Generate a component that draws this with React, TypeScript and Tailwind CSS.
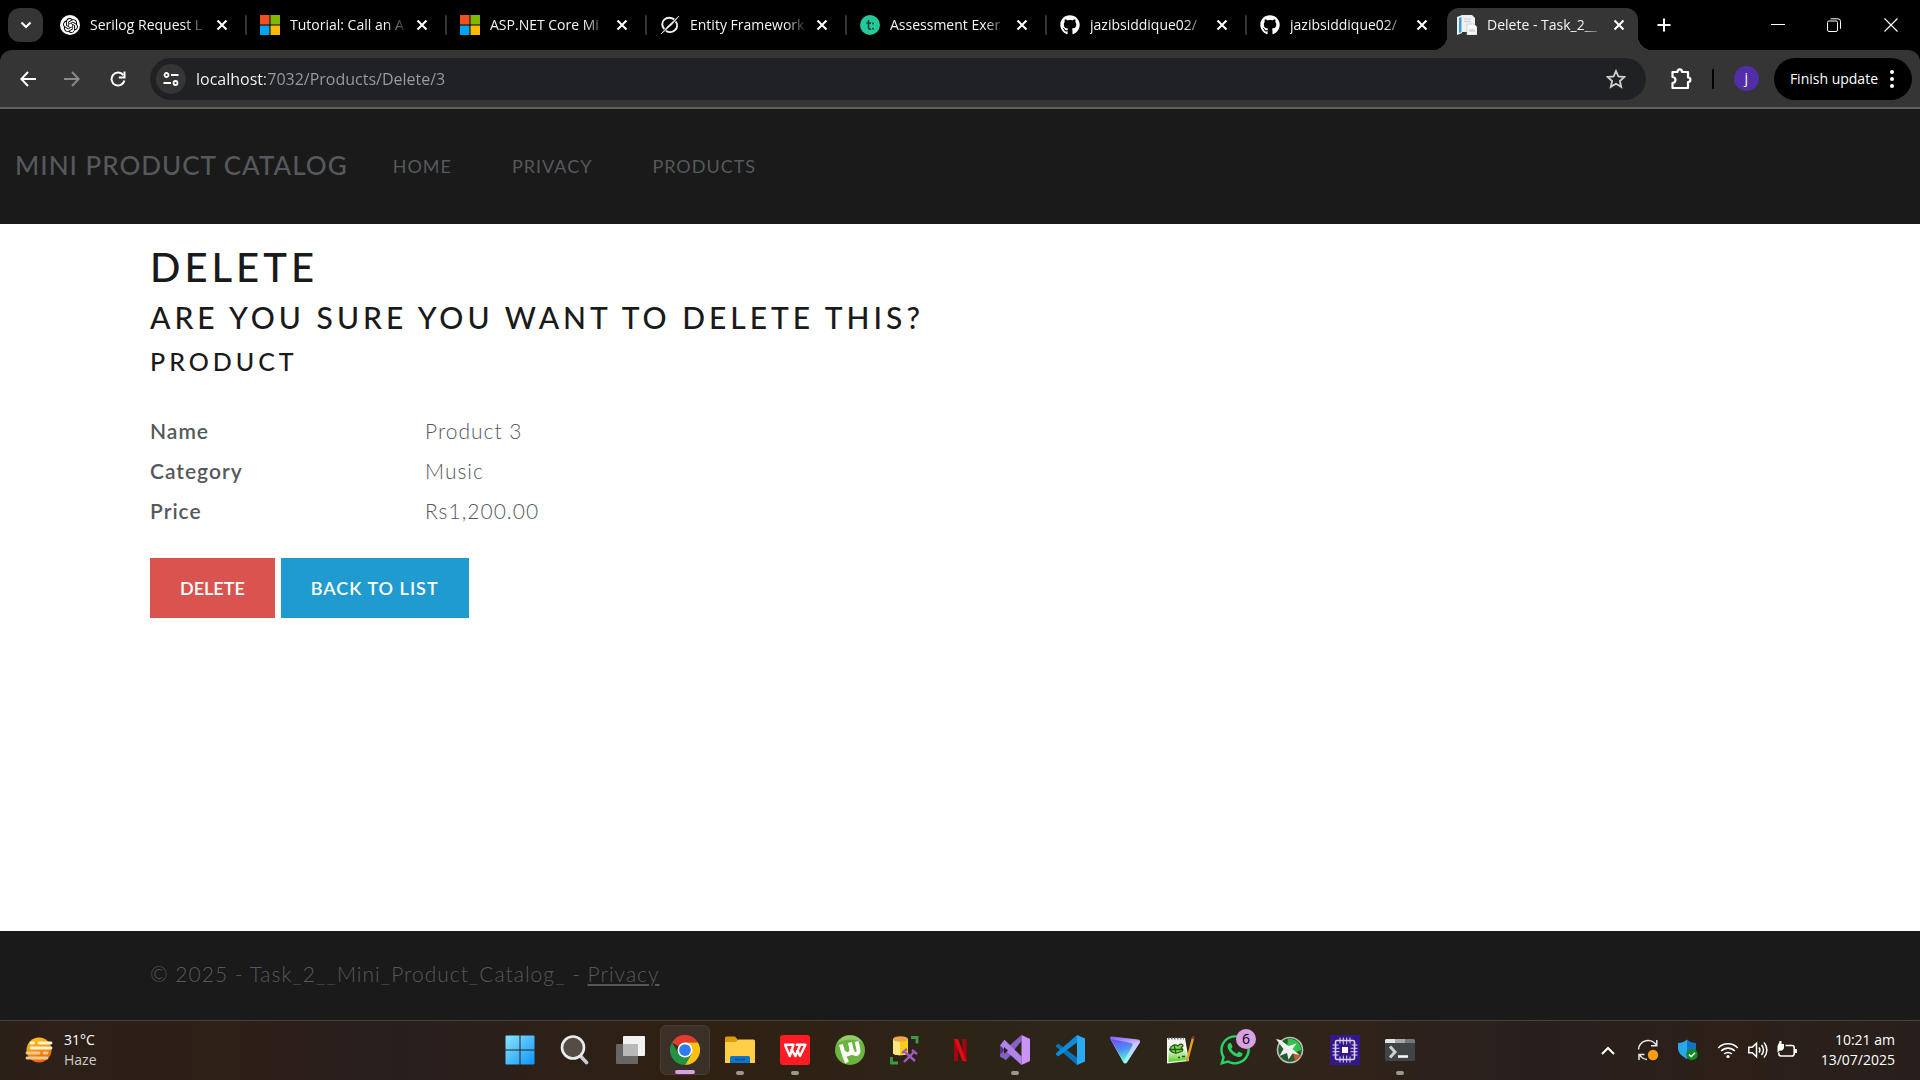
import type { ReactNode } from "react";
import { FaGithub, FaWhatsapp } from "react-icons/fa";
import { SiOpenai } from "react-icons/si";

/* ---------- favicons ---------- */

const OpenAiFavicon = () => (
  <span className="flex size-5 items-center justify-center rounded-full bg-white text-black">
    <SiOpenai size={15} />
  </span>
);

const MicrosoftFavicon = () => (
  <svg viewBox="0 0 20 20" className="size-5">
    <rect width="9.5" height="9.5" fill="#f25022" />
    <rect x="10.5" width="9.5" height="9.5" fill="#7fba00" />
    <rect y="10.5" width="9.5" height="9.5" fill="#00a4ef" />
    <rect x="10.5" y="10.5" width="9.5" height="9.5" fill="#ffb900" />
  </svg>
);

const SlashFavicon = () => (
  <svg viewBox="0 0 20 20" className="size-5" fill="none" stroke="#f1f1f1">
    <path d="M14.2 4.6A7 6.6 0 0 0 4.3 14M6 15.800A7 6.600 0 0 0 15.700 6.500" strokeWidth="2" />
    <path d="M1 19 8 11 19 1 12 9.500Z" fill="#f1f1f1" strokeWidth="0.6" />
  </svg>
);

const TealFavicon = () => (
  <svg viewBox="0 0 20 20" className="size-5">
    <circle cx="10" cy="10" r="10" fill="#22c99a" />
    <path d="M8.500 5v7.500c0 1.500 1 2 2.500 1.600M6.300 8h4.700" fill="none" stroke="#10403a" strokeWidth="1.600" />
    <circle cx="13" cy="8.500" r="1" fill="#10403a" />
    <circle cx="13" cy="13.800" r="1" fill="#10403a" />
  </svg>
);

const GithubFavicon = () => <FaGithub className="size-5 text-white" />;

const DocumentFavicon = () => (
  <svg viewBox="0 0 20 20" className="size-5">
    <path d="M0 2 5 0v18l-5 2Z" fill="#e8f1f7" />
    <path d="M2 3 4.500 2v15L2 18Z" fill="#3d9bd0" />
    <path d="M5 0h10l3 3v14H5Z" fill="#eef0f1" />
    <path d="M7 4h7M7 6.500h7" stroke="#c3cdd3" />
    <path d="M10 9h7l3 3v8H10Z" fill="#fafafa" stroke="#b9c4ca" strokeWidth="0.6" />
    <path d="M12 14h6v3h-6Z" fill="#d5dde2" />
  </svg>
);

/* ---------- browser chrome ---------- */

const CloseGlyph = () => (
  <svg viewBox="0 0 12 12" className="size-3" stroke="#fff" strokeWidth="2" fill="none">
    <path d="M1.500 1.500 10.500 10.500M10.500 1.500 1.500 10.500" />
  </svg>
);

const inactiveTabs: { title: string; icon: ReactNode }[] = [
  { title: "Serilog Request L", icon: <OpenAiFavicon /> },
  { title: "Tutorial: Call an A", icon: <MicrosoftFavicon /> },
  { title: "ASP.NET Core Mi", icon: <MicrosoftFavicon /> },
  { title: "Entity Framework", icon: <SlashFavicon /> },
  { title: "Assessment Exer", icon: <TealFavicon /> },
  { title: "jazibsiddique02/", icon: <GithubFavicon /> },
  { title: "jazibsiddique02/", icon: <GithubFavicon /> },
];

function TabLabel({ title, icon }: { title: string; icon: ReactNode }) {
  return (
    <>
      <span className="shrink-0">{icon}</span>
      <span className="ml-2.5 min-w-0 flex-1 whitespace-nowrap mask-r-from-80% mask-r-to-100%">{title}</span>
      <button aria-label={`Close ${title}`} className="ml-2 flex size-3 shrink-0 items-center justify-center">
        <CloseGlyph />
      </button>
    </>
  );
}

function TabStrip() {
  return (
    <div className="flex h-[50px] bg-black text-sm text-[#f4f4f4]">
      <button
        aria-label="Search tabs"
        className="mt-2 ml-2 flex h-[34px] w-[35px] shrink-0 items-center justify-center rounded-xl bg-[#353535]"
      >
        <svg viewBox="0 0 12 8" className="w-3" fill="none" stroke="#fff" strokeWidth="2.200">
          <path d="M1.500 1.500 6 6 10.500 1.500" />
        </svg>
      </button>
      <div className="ml-1 flex min-w-0">
        {inactiveTabs.map((tab, i) => (
          <div key={i} className="flex w-[200px] min-w-0 items-center pl-[13px]">
            <TabLabel {...tab} />
            <span className={i === 6 ? "ml-[17px] w-0.5" : "ml-[17px] h-5 w-0.5 rounded bg-[#353535]"} />
          </div>
        ))}
        <div className="relative mt-2 flex w-[191px] items-center rounded-t-xl bg-[#353535] pr-[13px] pb-2 pl-2.5">
          <span className="absolute bottom-0 -left-3.5 size-3.5 bg-[radial-gradient(circle_at_0_0,#000_14px,#353535_14px)]" />
          <span className="absolute -right-3.5 bottom-0 size-3.5 bg-[radial-gradient(circle_at_100%_0,#000_14px,#353535_14px)]" />
          <TabLabel title="Delete - Task_2__" icon={<DocumentFavicon />} />
        </div>
      </div>
      <button aria-label="New tab" className="ml-[19px] self-center">
        <svg viewBox="0 0 14 14" className="size-3.5" stroke="#fff" strokeWidth="2">
          <path d="M7 0.500v13M0.500 7h13" />
        </svg>
      </button>
      <div className="ml-auto flex shrink-0">
        <button aria-label="Minimize" className="flex w-14 items-center justify-center">
          <svg viewBox="0 0 14 14" className="size-3.5" stroke="#fff">
            <path d="M0 6.500h14" />
          </svg>
        </button>
        <button aria-label="Restore" className="flex w-14 items-center justify-center">
          <svg viewBox="0 0 14 14" className="size-3.5" stroke="#fff" fill="none">
            <rect x="0.500" y="3" width="10" height="10.500" rx="1.500" />
            <path d="M3.500 0.800H11a2.500 2.500 0 0 1 2.500 2.500v7.500" />
          </svg>
        </button>
        <button aria-label="Close window" className="flex w-[58px] items-center justify-center">
          <svg viewBox="0 0 14 14" className="size-3.5" stroke="#fff" strokeWidth="1.200">
            <path d="M0.500 0.500 13.500 13.500M13.500 0.500 0.500 13.500" />
          </svg>
        </button>
      </div>
    </div>
  );
}

function AddressBar() {
  return (
    <div className="bg-black">
      <div className="flex h-[59px] items-center rounded-t-xl border-b-2 border-[#5f6162] bg-[#353535] pr-2">
        <button aria-label="Back" className="ml-5 flex w-4 justify-center">
          <svg viewBox="0 0 16 16" className="size-4" stroke="#fff" strokeWidth="2" fill="none">
            <path d="M16 8H1.500M8 1 1.300 8 8 15" />
          </svg>
        </button>
        <button aria-label="Forward" className="ml-7 flex w-4 justify-center">
          <svg viewBox="0 0 16 16" className="size-4" stroke="#8a8a8a" strokeWidth="2" fill="none">
            <path d="M0 8h14.500M8 1l6.700 7L8 15" />
          </svg>
        </button>
        <button aria-label="Reload" className="ml-[30px] flex w-4 justify-center">
          <svg viewBox="0 0 16 16" className="size-4" stroke="#fff" strokeWidth="2" fill="none">
            <path d="M13.300 4.200A6.500 6.500 0 1 0 14.400 9.500" />
            <path d="M14.500 0.500v6H8.800" />
          </svg>
        </button>
        <div className="ml-6 flex h-[42px] min-w-0 flex-1 items-center rounded-full bg-[#202124] pr-5 pl-1.5">
          <button
            aria-label="View site information"
            className="flex size-[30px] shrink-0 items-center justify-center rounded-full bg-[#353535]"
          >
            <svg viewBox="0 0 16 16" className="size-4" stroke="#fff" strokeWidth="1.800" fill="none">
              <circle cx="3.500" cy="4" r="2" />
              <path d="M8 4h7.500M0.500 12H8" />
              <circle cx="12.500" cy="12" r="2" />
            </svg>
          </button>
          <input
            aria-label="Address"
            defaultValue="localhost:7032/Products/Delete/3"
            className="ml-2.5 min-w-0 flex-1 bg-[linear-gradient(to_right,#fff_69px,#9a9da1_69px)] bg-clip-text text-base text-transparent outline-none"
          />
          <button aria-label="Bookmark this tab">
            <svg viewBox="0 0 20 20" className="size-5" fill="none" stroke="#d0d0d0" strokeWidth="1.800">
              <path d="m10 2 2.400 5.500 6 .5-4.500 4 1.300 5.800L10 14.700l-5.200 3.100L6.100 12 1.600 8l6-.5Z" />
            </svg>
          </button>
        </div>
        <button aria-label="Extensions" className="ml-6">
          <svg viewBox="0 0 22 22" className="size-[22px]" fill="none" stroke="#fff" strokeWidth="2.200" strokeLinejoin="round">
            <path d="M2.500 4H7.500C7.500 0.500 12 0.500 12 4h6v5.500c3.200 0 3.200 4.500 0 4.500v6H2.500v-5c4-.5 4-5.500 0-6Z" />
          </svg>
        </button>
        <span className="ml-5 h-5 w-0.5 rounded bg-black" />
        <button
          aria-label="Profile"
          className="ml-5 flex size-[25px] items-center justify-center rounded-full bg-[#512da8] pb-0.5 text-sm text-white"
        >
          j
        </button>
        <button className="ml-[15px] flex h-[42px] items-center gap-3 rounded-full bg-black pr-[18px] pl-4 text-sm whitespace-nowrap text-white">
          Finish update
          <svg viewBox="0 0 4 18" className="h-[18px] w-1" fill="#fff">
            <circle cx="2" cy="2" r="2" />
            <circle cx="2" cy="9" r="2" />
            <circle cx="2" cy="16" r="2" />
          </svg>
        </button>
      </div>
    </div>
  );
}

/* ---------- web page ---------- */

const details = [
  ["Name", "Product 3"],
  ["Category", "Music"],
  ["Price", "Rs1,200.00"],
];

function CatalogPage() {
  return (
    <div className="flex flex-1 flex-col bg-white font-['Lato',sans-serif] text-[#55595c]">
      <header className="flex h-[115px] items-center bg-[#1a1a1a] pb-0.5 pl-[15px] uppercase">
        <a href="#" className="text-[26px] font-medium tracking-[1px]">
          Mini Product Catalog
        </a>
        <nav className="ml-[45px] flex gap-[60px] text-lg tracking-[1px]">
          <a href="#">Home</a>
          <a href="#">Privacy</a>
          <a href="#">Products</a>
        </nav>
      </header>
      <main className="mx-auto w-full max-w-[1620px] flex-1 pt-[19px]">
        <h1 className="text-[40px] leading-[48px] font-medium tracking-[4px] text-[#1a1a1a] uppercase">Delete</h1>
        <h3 className="mt-2 text-3xl leading-9 font-medium tracking-[4px] text-[#1a1a1a] uppercase">
          Are you sure you want to delete this?
        </h3>
        <h4 className="mt-[11px] text-[25px] leading-[30px] font-medium tracking-[4px] text-[#1a1a1a] uppercase">
          Product
        </h4>
        <dl className="mt-10 grid grid-cols-[275px_1fr] gap-y-2.5 text-[21px] leading-[30px] tracking-[1px]">
          {details.map(([term, value]) => (
            <div key={term} className="contents">
              <dt className="font-semibold">{term}</dt>
              <dd className="font-light">{value}</dd>
            </div>
          ))}
        </dl>
        <form className="mt-8 flex gap-1.5" onSubmit={(e) => e.preventDefault()}>
          <button type="submit" className="h-[60px] bg-[#d9534f] px-[30px] text-lg font-semibold text-white uppercase">
            Delete
          </button>
          <a
            href="#"
            className="flex h-[60px] items-center bg-[#1f9bcf] px-[30px] text-lg font-semibold tracking-[1px] text-white uppercase"
          >
            Back to List
          </a>
        </form>
      </main>
      <footer className="h-[89px] bg-[#1a1a1a] pt-7">
        <div className="mx-auto w-full max-w-[1620px] text-[21px] leading-[30px] font-light tracking-[1px]">
          © 2025 - Task_2__Mini_Product_Catalog_ -{" "}
          <a href="#" className="underline">
            Privacy
          </a>
        </div>
      </footer>
    </div>
  );
}

/* ---------- taskbar icons ---------- */

const StartIcon = () => (
  <svg viewBox="0 0 30 30" className="size-[30px]">
    <defs>
      <linearGradient id="start" x1="0" y1="0" x2="1" y2="1">
        <stop offset="0" stopColor="#8be4ff" />
        <stop offset="1" stopColor="#0a95ff" />
      </linearGradient>
    </defs>
    <path
      fill="url(#start)"
      d="M1.500.5H14.500V14.500H.5V1.500a1 1 0 0 1 1-1ZM15.500.5h13a1 1 0 0 1 1 1v13h-14ZM.5 15.500h14v14h-13a1 1 0 0 1-1-1ZM15.500 15.500h14v13a1 1 0 0 1-1 1h-13Z"
    />
  </svg>
);

const SearchIcon = () => (
  <svg viewBox="0 0 30 30" className="size-[30px]">
    <path d="m19.500 20 7 7.500" stroke="#c9cdd3" strokeWidth="3.600" strokeLinecap="round" />
    <circle cx="13" cy="12.500" r="11" fill="#544c45" stroke="#e9ebee" strokeWidth="2.600" />
  </svg>
);

const TaskViewIcon = () => (
  <svg viewBox="0 0 30 30" className="size-[30px]">
    <rect x="1" y="9" width="22" height="20" rx="1" fill="#666" />
    <rect x="8" y="1" width="22" height="20" rx="1" fill="#f2f2f2" />
    <path d="M8 9h15v12H8Z" fill="#b8b8b8" />
  </svg>
);

const ChromeIcon = () => (
  <svg viewBox="0 0 48 48" className="size-[30px]">
    <path d="M24 24 3.200 12A24 24 0 0 1 44.800 12H24Z" fill="#e33b2e" />
    <path d="M24 12h20.800A24 24 0 0 1 24 48l10.400-18Z" fill="#fbc116" />
    <path d="M3.200 12A24 24 0 0 0 24 48l10.400-18H13.600Z" fill="#229342" />
    <circle cx="24" cy="24" r="12" fill="#fff" />
    <circle cx="24" cy="24" r="9.400" fill="#2f7cf0" />
  </svg>
);

const ExplorerIcon = () => (
  <svg viewBox="0 0 30 30" className="size-[30px]">
    <path d="M0 3a1.500 1.500 0 0 1 1.500-1.500H10l3 3.500h8v6H0Z" fill="#dd9b06" />
    <path d="M0 7h10.500l3-2.500H28.500A1.500 1.500 0 0 1 30 6v22H0Z" fill="#ffcf48" />
    <path d="M5 28v-5.500A1.500 1.500 0 0 1 6.500 21h17a1.500 1.500 0 0 1 1.500 1.500V28Z" fill="#0f76c6" />
    <path d="M10 24.500h10" stroke="#0a4f92" strokeWidth="1.500" />
  </svg>
);

const WpsIcon = () => (
  <svg viewBox="0 0 30 30" className="size-[30px]">
    <rect width="30" height="30" rx="3" fill="#ff1a24" />
    <path
      d="M4.200 9.800H13.500L9.800 21 5 10M10.800 13.500 15.500 21 20.200 9.800M15.800 9.800H25.500L20 21l-3-6.500"
      fill="none"
      stroke="#fff"
      strokeWidth="2.400"
      strokeLinejoin="round"
    />
  </svg>
);

const TorrentIcon = () => (
  <svg viewBox="0 0 30 30" className="size-[30px]">
    <circle cx="15" cy="15" r="15" fill="#6cb33f" />
    <path d="M2 8A15 15 0 0 1 28 8C20 3 10 4 2 8Z" fill="#92cb6a" />
    <path
      d="M6 9.500c1.500 5 2.500 11 6 18M8.500 17c2.500 3.500 7.500 2.500 8-2L15 7.500M16.500 14c1 4 3.500 6 6 4.500 2-1.500.500-6.500-1-12"
      fill="none"
      stroke="#fff"
      strokeWidth="4"
    />
  </svg>
);

const DatabaseIcon = () => (
  <svg viewBox="0 0 30 30" className="size-[30px]">
    <path d="M3 4v14c0 3 15 3 15 0V4Z" fill="#fbcf12" />
    <path d="M3 4v14c0 1.500 3.500 2.200 7 2.200V4Z" fill="#ffe680" />
    <ellipse cx="10.500" cy="4" rx="7.500" ry="2.800" fill="#f0a64a" />
    <path d="M21 2.500h6v6M1.500 22v6H8" fill="none" stroke="#3c9a46" strokeWidth="2.800" />
    <path d="m14 27 10-10M25 26 15 17M12 18l5-4M22 15l5 4" stroke="#a15bc0" strokeWidth="2.400" />
  </svg>
);

const NetflixIcon = () => (
  <svg viewBox="0 0 30 30" className="size-[30px]">
    <path d="M9 4h4v22l-4 .500ZM17.500 4h4v22.500l-4-.500Z" fill="#a4060d" />
    <path d="M9 4h4l8.500 22.500-4-.500Z" fill="#e50914" />
  </svg>
);

const VisualStudioIcon = () => (
  <svg viewBox="0 0 30 30" className="size-[30px]">
    <path d="M0 10.500 2.500 9.300 14 18.500 6 25 0 21.500Z" fill="#52358c" />
    <path d="M4 15.500 0 20v1.500L6 25l15.500-19V0Z" fill="#8561c5" />
    <path d="m4.500 4.800 17 16.700V30L0 10.500Z" fill="#b083eb" />
    <path d="M21.500 0 30 4v22l-8.500 4Z" fill="#cb94fb" />
    <path d="M4 12v7l4-3.500Z" fill="#2c2218" />
  </svg>
);

const VsCodeIcon = () => (
  <svg viewBox="0 0 30 30" className="size-[30px]">
    <path d="m1 10.500 2.200-2L22 22.500V30L1 11.800Z" fill="#0a72b8" />
    <path d="m1 19.500 2.200 2L22 7.500V0L1 18.200Z" fill="#0f8ad6" />
    <path d="M22 0 30 3.500v23L22 30Z" fill="#2aaaf2" />
  </svg>
);

const ProtonIcon = () => (
  <svg viewBox="0 0 30 30" className="size-[30px]">
    <defs>
      <linearGradient id="proton" x1="0.2" y1="0" x2="0.5" y2="1">
        <stop offset="0" stopColor="#6a4bff" />
        <stop offset="0.500" stopColor="#4c8ff0" />
        <stop offset="1" stopColor="#5effd5" />
      </linearGradient>
      <linearGradient id="protonEdge" x1="0" y1="0" x2="0.300" y2="1">
        <stop offset="0" stopColor="#7a5cff" />
        <stop offset="0.500" stopColor="#cfc6ff" />
        <stop offset="1" stopColor="#9ff5f0" />
      </linearGradient>
    </defs>
    <path d="M2 1.500 28 4.500c2 .3 2.700 2 1.600 3.600L17 27.500c-1 1.500-3 1.200-3.700-.3L.3 4C-.4 2.500.500 1.300 2 1.500Z" fill="url(#protonEdge)" />
    <path d="m1 4 20 4c1.500.3 2 1.800 1.200 3L13.500 27Z" fill="url(#proton)" />
  </svg>
);

const NotepadIcon = () => (
  <svg viewBox="0 0 30 30" className="size-[30px]">
    <defs>
      <linearGradient id="note" x1="0" y1="0" x2="0" y2="1">
        <stop offset="0.400" stopColor="#f3f5f0" />
        <stop offset="1" stopColor="#4fd01e" />
      </linearGradient>
    </defs>
    <path d="M2 3h18l4 23-22 2.500Z" fill="#f3f5f0" />
    <path d="M3.500 6h16l3 19-19 2Z" fill="url(#note)" />
    <path d="M3 3.500h16" stroke="#777" strokeWidth="2" strokeDasharray="1.500 1.500" />
    <path d="M5 14c1-4 5-5 8-3 2-3 5-2 5 0l-2 2c3 1 2 4-1 4-4 2-9 1-10-3Z" fill="#7fdc4b" stroke="#255a15" strokeWidth="1.200" />
    <path d="M4 14.500h14M9 9.500l2 9M13 22.500h2M17 21.500h3" stroke="#255a15" strokeWidth="1.300" fill="none" />
    <path d="M28 3 22 26" stroke="#e8a21a" strokeWidth="2.400" />
    <path d="m28.500 1.500-.6 2.500" stroke="#a33" strokeWidth="2.600" />
  </svg>
);

const WhatsappIcon = () => (
  <span className="relative">
    <FaWhatsapp className="size-[34px] text-[#25d366]" />
    <span className="absolute -top-1 -right-1 flex size-5 items-center justify-center rounded-full bg-[#d9a0e4] text-sm text-black">
      6
    </span>
  </span>
);

const JetIcon = () => (
  <svg viewBox="0 0 30 30" className="size-[30px]">
    <circle cx="15" cy="15" r="12.500" fill="#255a2e" stroke="#b5bdb5" strokeWidth="1.600" />
    <path d="M13 4a11 11 0 0 1 13 11l-7 3-7-6Z" fill="#33c24a" />
    <path d="m18 17 8 4-6 5Z" fill="#c9582b" />
    <path d="m1 4 4.500 1 8 6 8-2.500-4 5.500 7 6-7-1.500-4 6-1.500-6.500L4.500 21l4-7Z" fill="#f0f2f0" />
  </svg>
);

const ChipIcon = () => (
  <svg viewBox="0 0 30 30" className="size-[30px]">
    <rect width="30" height="30" fill="#34188a" />
    <g stroke="#d9d2f5" fill="none">
      <rect x="5.500" y="5.500" width="19" height="19" rx="1.500" strokeWidth="1.600" />
      <path d="M10 2.500v6M13.300 2.500v7M16.700 2.500v7M20 2.500v6M10 21.500v6M13.300 20.500v7M16.700 20.500v7M20 21.500v6M2.500 10h6M2.500 13.300h7M2.500 16.700h7M2.500 20h6M21.500 10h6M20.500 13.300h7M20.500 16.700h7M21.500 20h6" />
    </g>
    <rect x="12" y="12" width="6" height="6" fill="#fff" />
  </svg>
);

const TerminalIcon = () => (
  <svg viewBox="0 0 30 30" className="size-[30px]">
    <rect y="4" width="30" height="22" rx="1.500" fill="#3f4447" />
    <path d="M0 8V5.500A1.500 1.500 0 0 1 1.500 4H10v4Z" fill="#e4e4e4" />
    <path d="M10 4h10v4H10Z" fill="#a8a8a8" />
    <path d="M20 4h8.500A1.500 1.500 0 0 1 30 5.500V8H20Z" fill="#777" />
    <path d="m5 11.500 5 5.500-5 5.500" fill="none" stroke="#cfcfcf" strokeWidth="3" />
    <path d="M13 21.500h10" stroke="#f5f5f5" strokeWidth="2.600" />
  </svg>
);

const taskbarApps: { name: string; icon: ReactNode; state?: "active" | "open" }[] = [
  { name: "Start", icon: <StartIcon /> },
  { name: "Search", icon: <SearchIcon /> },
  { name: "Task View", icon: <TaskViewIcon /> },
  { name: "Chrome", icon: <ChromeIcon />, state: "active" },
  { name: "File Explorer", icon: <ExplorerIcon />, state: "open" },
  { name: "WPS Office", icon: <WpsIcon />, state: "open" },
  { name: "uTorrent", icon: <TorrentIcon /> },
  { name: "SQL Server Management Studio", icon: <DatabaseIcon /> },
  { name: "Netflix", icon: <NetflixIcon /> },
  { name: "Visual Studio", icon: <VisualStudioIcon />, state: "open" },
  { name: "Visual Studio Code", icon: <VsCodeIcon /> },
  { name: "Proton VPN", icon: <ProtonIcon /> },
  { name: "Notepad++", icon: <NotepadIcon /> },
  { name: "WhatsApp", icon: <WhatsappIcon /> },
  { name: "Jet", icon: <JetIcon /> },
  { name: "Chip", icon: <ChipIcon /> },
  { name: "Terminal", icon: <TerminalIcon />, state: "open" },
];

const WeatherIcon = () => (
  <svg viewBox="0 0 30 30" className="size-[30px]">
    <defs>
      <linearGradient id="sun" x1="0" y1="0" x2="0.300" y2="1">
        <stop offset="0" stopColor="#ffce1f" />
        <stop offset="1" stopColor="#f0660a" />
      </linearGradient>
    </defs>
    <circle cx="15" cy="15" r="12.500" fill="url(#sun)" />
    <g strokeWidth="2.800" strokeLinecap="round">
      <path d="M7 8h2.500M15 8h12M7 13h20" stroke="#fff3d0" />
      <path d="M3 18h12M20 18h3M3 23h20" stroke="#ecca8c" />
    </g>
  </svg>
);

function Taskbar() {
  return (
    <div className="grid h-[60px] grid-cols-[1fr_auto_1fr] bg-[linear-gradient(to_right,#2b2018,#2e1f17_12%,#281f1e_20%,#2f2013_35%,#2c2519_55%,#30241a_70%,#281f1d_80%,#2c2018_90%,#281f1d)] text-sm text-white inset-shadow-[0_1px_#4b433a]">
      <button className="flex items-center gap-2.5 pl-6 text-left leading-5">
        <WeatherIcon />
        <span>
          <span className="block">31°C</span>
          <span className="block text-[#d0cbc6]">Haze</span>
        </span>
      </button>
      <div className="flex">
        {taskbarApps.map((app) => (
          <div key={app.name} className="flex w-[55px] items-center justify-center">
            <button
              aria-label={app.name}
              className={
                app.state === "active"
                  ? "relative flex size-[50px] items-center justify-center rounded-md border border-[#463d34] bg-[#3a3028]"
                  : "relative flex size-[50px] items-center justify-center"
              }
            >
              {app.icon}
              {app.state === "active" && <span className="absolute bottom-0 h-1 w-5 rounded-full bg-[#d9a0e4]" />}
              {app.state === "open" && <span className="absolute bottom-0 h-1 w-2 rounded-full bg-[#9c9792]" />}
            </button>
          </div>
        ))}
      </div>
      <div className="flex items-center justify-end pr-[25px]">
        <button aria-label="Show hidden icons">
          <svg viewBox="0 0 14 9" className="w-3.5" fill="none" stroke="#fff" strokeWidth="2">
            <path d="m1 8 6-6 6 6" />
          </svg>
        </button>
        <button aria-label="Updates" className="ml-[22px]">
          <svg viewBox="0 0 22 22" className="size-[22px]" fill="none" stroke="#e8e8e8" strokeWidth="1.500">
            <path d="M1.500 10.500A9.500 9 0 0 1 19.500 6.500M19.800 1v5.700H14M10 20.500a9.500 9.500 0 0 1-7.500-5M2 21v-5.500h5.500" />
            <circle cx="16" cy="16" r="5.200" fill="#ff9c12" stroke="none" />
          </svg>
        </button>
        <button aria-label="Windows Security" className="ml-[19px]">
          <svg viewBox="0 0 20 22" className="h-[22px] w-5">
            <path d="M0 4c4 0 6.500-1.500 9-3.500V20C3 17 0 13 0 9Z" fill="#2aa7e8" />
            <path d="M9 .5C11.500 2.500 14 4 18 4v5c0 4-3 8-9 11Z" fill="#1473c4" />
            <circle cx="14" cy="15.500" r="5.800" fill="#0f8a24" />
            <path d="m11 15.500 2.200 2.200 3.800-4" fill="none" stroke="#fff" strokeWidth="1.500" />
          </svg>
        </button>
        <button aria-label="Network, volume and battery" className="ml-[19px] flex items-center gap-[9px]">
          <svg viewBox="0 0 22 18" className="w-[22px]" fill="none" stroke="#fff" strokeWidth="1.600">
            <path d="M1.200 7a13.500 13.500 0 0 1 19.600 0M4.200 10a9.500 9.500 0 0 1 13.600 0M7.200 13a5.400 5.400 0 0 1 7.600 0" />
            <circle cx="11" cy="15.500" r="1.600" fill="#fff" stroke="none" />
          </svg>
          <svg viewBox="0 0 20 18" className="w-5" fill="none" stroke="#fff" strokeWidth="1.500">
            <path d="M.8 6.200h3.400L8.500 2.200v13.600l-4.300-4H.8ZM11 6.500c1.200 1.600 1.200 3.400 0 5M13.500 4c2.400 3 2.400 7 0 10M16 1.500c3.800 4.500 3.800 10.500 0 15" />
          </svg>
          <svg viewBox="0 0 20 18" className="w-5" fill="none" stroke="#fff" strokeWidth="1.600">
            <path d="M8.500 4.500H15A2.200 2.200 0 0 1 17.200 6.700v6.100A2.200 2.200 0 0 1 15 15H4a2.200 2.200 0 0 1-2.200-2.200V11.500" />
            <path d="M18.800 8v4" strokeWidth="2.200" />
            <path d="M4.500 0v3H7v3.500C7 9 4.500 10 3 9.500L.5 11.500V5.500C.5 3.500 2.500 2.500 2.500 0Z" fill="#fff" stroke="none" />
          </svg>
        </button>
        <button className="ml-6 text-right leading-5">
          <span className="block">10:21 am</span>
          <span className="block">13/07/2025</span>
        </button>
      </div>
    </div>
  );
}

export default function App() {
  return (
    <div className="flex min-h-screen flex-col bg-black font-['Open_Sans','Noto_Sans',sans-serif]">
      <TabStrip />
      <AddressBar />
      <CatalogPage />
      <Taskbar />
    </div>
  );
}
